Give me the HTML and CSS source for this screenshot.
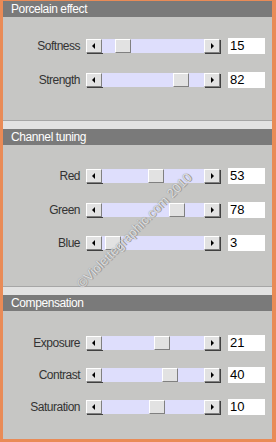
FILE: index.html
```html
<!DOCTYPE html>
<html lang="en">
<head>
    <meta charset="UTF-8">
    <title>Porcelain</title>
    <link rel="stylesheet" href="styles.css">
</head>
<body>
    <div class="frame">
        <!-- Porcelain effect -->
        <div class="section">
            <div class="section-head">Porcelain effect</div>
            <div class="section-body first">
                <div class="row">
                    <span class="label">Softness</span>
                    <div class="scroll">
                        <span class="arrow left"></span>
                        <div class="track"><span class="thumb" style="--p: 0.15"></span></div>
                        <span class="arrow right"></span>
                    </div>
                    <span class="value">15</span>
                </div>
                <div class="row">
                    <span class="label">Strength</span>
                    <div class="scroll">
                        <span class="arrow left"></span>
                        <div class="track"><span class="thumb" style="--p: 0.82"></span></div>
                        <span class="arrow right"></span>
                    </div>
                    <span class="value">82</span>
                </div>
            </div>
        </div>

        <div class="spacer"></div>

        <!-- Channel tuning -->
        <div class="section">
            <div class="section-head">Channel tuning</div>
            <div class="section-body second">
                <div class="row">
                    <span class="label">Red</span>
                    <div class="scroll">
                        <span class="arrow left"></span>
                        <div class="track"><span class="thumb" style="--p: 0.53"></span></div>
                        <span class="arrow right"></span>
                    </div>
                    <span class="value">53</span>
                </div>
                <div class="row">
                    <span class="label">Green</span>
                    <div class="scroll">
                        <span class="arrow left"></span>
                        <div class="track"><span class="thumb" style="--p: 0.78"></span></div>
                        <span class="arrow right"></span>
                    </div>
                    <span class="value">78</span>
                </div>
                <div class="row">
                    <span class="label">Blue</span>
                    <div class="scroll">
                        <span class="arrow left"></span>
                        <div class="track"><span class="thumb" style="--p: 0.03"></span></div>
                        <span class="arrow right"></span>
                    </div>
                    <span class="value">3</span>
                </div>
            </div>
        </div>

        <div class="spacer"></div>

        <!-- Compensation (range -100..100) -->
        <div class="section">
            <div class="section-head">Compensation</div>
            <div class="section-body third">
                <div class="row">
                    <span class="label">Exposure</span>
                    <div class="scroll">
                        <span class="arrow left"></span>
                        <div class="track"><span class="thumb" style="--p: 0.605"></span></div>
                        <span class="arrow right"></span>
                    </div>
                    <span class="value">21</span>
                </div>
                <div class="row">
                    <span class="label">Contrast</span>
                    <div class="scroll">
                        <span class="arrow left"></span>
                        <div class="track"><span class="thumb" style="--p: 0.70"></span></div>
                        <span class="arrow right"></span>
                    </div>
                    <span class="value">40</span>
                </div>
                <div class="row">
                    <span class="label">Saturation</span>
                    <div class="scroll">
                        <span class="arrow left"></span>
                        <div class="track"><span class="thumb" style="--p: 0.55"></span></div>
                        <span class="arrow right"></span>
                    </div>
                    <span class="value">10</span>
                </div>
            </div>
        </div>

        <div class="watermark">&copy;Violettegraphic.com 2010</div>
    </div>
</body>
</html>
```

FILE: styles.css
```css
html, body {
    margin: 0;
    padding: 0;
    font-family: "Liberation Sans", Arial, sans-serif;
}

body {
    width: 276px;
    height: 442px;
    background-color: #e98b57;
}

.frame {
    position: relative;
    height: 438px;
    border-top: 1px solid #e98b57;
    border-left: 3px solid #e98b57;
    border-right: 4px solid #e98b57;
    border-bottom: 3px solid #e98b57;
    background-color: #c6c6c4;
    display: flex;
    flex-direction: column;
    overflow: hidden;
}

.section-head {
    height: 16px;
    line-height: 16px;
    padding-left: 8px;
    background-color: #7a7a7a;
    color: #fff;
    font-size: 12px;
    letter-spacing: -0.4px;
}

.section-body {
    display: flex;
    flex-direction: column;
}

.section-body.first {
    padding: 21px 0 32px;
    gap: 18px;
}

.section-body.second {
    padding: 23px 0 35px;
    gap: 17.5px;
}

.section-body.third {
    padding: 24px 0 0;
    gap: 16px;
}

.spacer {
    height: 8px;
    border-top: 1px solid #a6a6a6;
    background-color: #e2e2e2;
}

.row {
    display: flex;
    align-items: center;
    height: 16px;
}

.label {
    width: 77px;
    text-align: right;
    font-size: 12px;
    letter-spacing: -0.5px;
    color: #333;
    margin-right: 6px;
}

.scroll {
    display: flex;
    align-items: center;
    height: 14px;
}

.arrow {
    position: relative;
    box-sizing: border-box;
    width: 16px;
    height: 14px;
    background-color: #e2e2e2;
    border-top: 1px solid #fff;
    border-left: 1px solid #fff;
    border-right: 1px solid #808080;
    border-bottom: 1px solid #808080;
    box-shadow: 1px 1px 0 #404040;
}

.arrow::after {
    content: "";
    position: absolute;
    top: 3px;
    left: 5px;
    border-top: 3px solid transparent;
    border-bottom: 3px solid transparent;
}

.arrow.left::after {
    border-right: 3px solid #000;
}

.arrow.right::after {
    left: 6px;
    border-left: 3px solid #000;
}

.track {
    position: relative;
    width: 102px;
    height: 14px;
    background-color: #dedefc;
}

/* thumb slides over the track, --p is the value 0..1 */
.thumb {
    position: absolute;
    top: 0;
    left: calc(var(--p, 0) * 86px);
    box-sizing: border-box;
    width: 16px;
    height: 14px;
    background-color: #e2e2e2;
    border-top: 1px solid #fff;
    border-left: 1px solid #fff;
    border-right: 1px solid #808080;
    border-bottom: 1px solid #808080;
}

.value {
    box-sizing: border-box;
    width: 37px;
    height: 16px;
    line-height: 16px;
    margin-left: 8px;
    padding-left: 2px;
    background-color: #fff;
    font-size: 13px;
    color: #000;
}

.watermark {
    position: absolute;
    left: 76px;
    top: 277px;
    font-size: 13px;
    line-height: 15px;
    color: rgba(248, 248, 248, 0.75);
    text-shadow: 0 0 1px #7e7e7e, 1px 1px 0 #a4a4a4;
    transform: rotate(-45deg);
    transform-origin: left center;
    white-space: nowrap;
    pointer-events: none;
}
```
